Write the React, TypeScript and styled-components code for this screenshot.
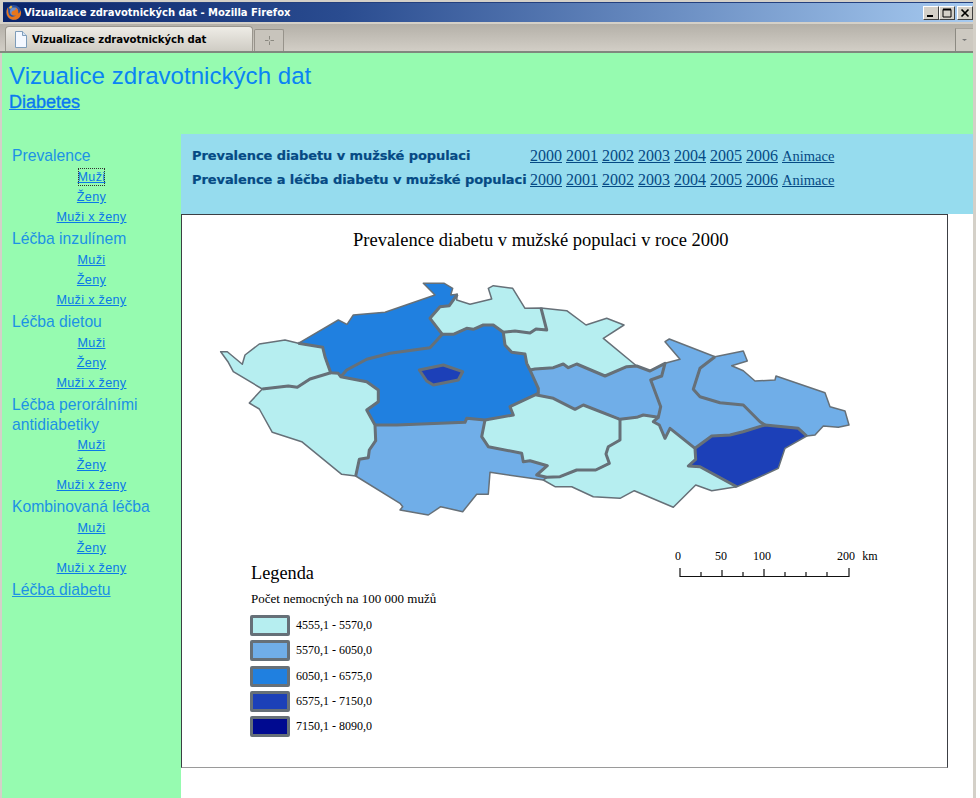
import React from "react";
import styled, { createGlobalStyle } from "styled-components";

const Global = createGlobalStyle`
  html, body { margin: 0; padding: 0; background: #fff; }
`;

const Frame = styled.div`
  width: 976px;
  height: 798px;
  overflow: hidden;
  display: flex;
  flex-direction: column;
  background: #d4d0c8;
`;

const TitleBar = styled.div`
  height: 20px;
  margin: 2px 3px 0;
  padding: 0 0 0 2px;
  display: flex;
  align-items: center;
  gap: 2px;
  background: linear-gradient(90deg, #0a246a 0%, #2a4c90 35%, #a6caf0 100%);
  border-top: 1px solid #24407e;
  box-sizing: border-box;
`;

const TitleText = styled.span`
  flex: 1;
  font: bold 10px "DejaVu Sans", sans-serif;
  color: #fff;
  white-space: nowrap;
  letter-spacing: -0.03px;
`;

const WinButtons = styled.div`
  display: flex;
  gap: 0;
`;

const WinButton = styled.div<{ $gap?: number }>`
  width: 16px;
  height: 14px;
  margin-left: ${(p) => p.$gap ?? 0}px;
  box-sizing: border-box;
  display: flex;
  align-items: center;
  justify-content: center;
  background: #d4d0c8;
  border: 1px solid;
  border-color: #fff #404040 #404040 #fff;
`;

const TabStrip = styled.div`
  height: 29px;
  margin: 2px 3px 0 0;
  padding: 3px 0 0 5px;
  display: flex;
  align-items: flex-end;
  gap: 1px;
  box-sizing: border-box;
  background: linear-gradient(180deg, #b4b0a8 0%, #d2cec6 100%);
  border-bottom: 2px solid #80887e;
`;

const Tab = styled.div`
  width: 248px;
  height: 25px;
  box-sizing: border-box;
  padding-left: 8px;
  display: flex;
  align-items: center;
  gap: 4px;
  background: linear-gradient(180deg, #eeece6 0%, #cfccc4 100%);
  border: 1px solid #9a968e;
  border-bottom: 0;
  border-radius: 4px 4px 0 0;
  font: bold 10.2px "DejaVu Sans", sans-serif;
  letter-spacing: -0.1px;
  color: #000;
`;

const NewTab = styled.div`
  width: 30px;
  height: 22px;
  box-sizing: border-box;
  display: flex;
  align-items: center;
  justify-content: center;
  background: #c8c4bc;
  border: 1px solid #97938b;
  border-bottom: 0;
  border-radius: 2px 2px 0 0;
`;

const TabSpacer = styled.div`
  flex: 1;
`;

const TabMenu = styled.div`
  width: 18px;
  height: 23px;
  box-sizing: border-box;
  display: flex;
  align-items: center;
  justify-content: center;
  background: #cdc9c1;
  border-left: 1px solid #8c8a82;
  border-top: 1px solid #a8a49c;
`;

const Page = styled.div`
  flex: 1;
  min-height: 0;
  margin: 0 3px 0 2px;
  background: #fff;
  display: flex;
  flex-direction: column;
`;

const Header = styled.header`
  height: 81px;
  flex: none;
  box-sizing: border-box;
  padding: 9px 0 0 7px;
  background: #96fbb0;
`;

const Heading = styled.h1`
  margin: 0;
  font: 400 24.1px/28px "Liberation Sans", Arial, sans-serif;
  color: #0a84f4;
`;

const SubHeading = styled.a`
  display: inline-block;
  margin-top: 1px;
  font: 400 18px/22px "Liberation Sans", Arial, sans-serif;
  color: #0a78f0;
  text-decoration: underline;
  -webkit-text-stroke: 0.35px #0a78f0;
`;

const Body = styled.div`
  flex: 1;
  min-height: 0;
  display: flex;
`;

const Sidebar = styled.nav`
  width: 179px;
  flex: none;
  box-sizing: border-box;
  padding-top: 12px;
  background: #96fbb0;
  font-family: "Liberation Sans", Arial, sans-serif;
`;

const Group = styled.div`
  margin-bottom: 2px;
`;

const GroupTitle = styled.div<{ $link?: boolean; $wrapped?: boolean }>`
  padding: 0 8px 0 10px;
  margin-bottom: ${(p) => (p.$wrapped ? 0 : 1)}px;
  font-size: 15.7px;
  line-height: 20px;
  color: #1c92e4;
  text-decoration: ${(p) => (p.$link ? "underline" : "none")};
`;

const SideLink = styled.a<{ $focused?: boolean }>`
  display: block;
  width: max-content;
  margin: 0 auto;
  padding: 0 1px;
  font-size: 12.6px;
  line-height: 20px;
  letter-spacing: 0.32px;
  color: #0a78e8;
  text-decoration: underline;
  outline: ${(p) => (p.$focused ? "1px dotted #333" : "none")};
  outline-offset: -2px;
`;

const Main = styled.main`
  flex: 1;
  min-width: 0;
  background: #fff;
`;

const Filters = styled.section`
  height: 80px;
  box-sizing: border-box;
  padding: 9px 0 0 11px;
  background: #96dcee;
`;

const FilterRow = styled.div`
  height: 24px;
  display: grid;
  grid-template-columns: 338px 1fr;
  align-items: center;
`;

const FilterTitle = styled.span`
  font: bold 13px "DejaVu Sans", sans-serif;
  letter-spacing: -0.08px;
  color: #054a84;
  white-space: nowrap;
  -webkit-text-stroke: 0.2px #054a84;
`;

const Years = styled.span`
  margin-top: 2px;
  font: 16px "Liberation Serif", "Times New Roman", serif;
  color: #054a84;
`;

const YearLink = styled.a<{ $small?: boolean }>`
  font-size: ${(p) => (p.$small ? "14.5px" : "16px")};
  color: #054a84;
  text-decoration: underline;
  margin-right: 4px;
`;

const MapPanel = styled.section`
  width: 767px;
  height: 554px;
  box-sizing: border-box;
  border: 1px solid #3c3f44;
  border-bottom-color: #9a9a9a;
  background: #fff;
  font-family: "Liberation Serif", "Times New Roman", serif;
  color: #000;
`;

const MapTitle = styled.h2`
  margin: 15px 0 0 171px;
  font-weight: 400;
  font-size: 18.5px;
  line-height: 20px;
  white-space: nowrap;
`;

const MapSvg = styled.svg`
  display: block;
  width: 650px;
  height: 245px;
  margin: 25px 0 0 28px;
`;

const MapFoot = styled.div`
  display: flex;
  align-items: flex-start;
  margin-top: 25px;
`;

const Legend = styled.div`
  width: 420px;
  margin: 17px 0 0 68px;
`;

const LegendTitle = styled.div`
  padding-left: 1px;
  font-size: 18.300px;
  line-height: 22px;
`;

const LegendNote = styled.div`
  margin-top: 7px;
  padding-left: 1px;
  font-size: 13px;
  line-height: 15px;
`;

const LegendRows = styled.div`
  display: flex;
  flex-direction: column;
  gap: 4.3px;
  margin-top: 9px;
`;

const LegendRow = styled.div`
  display: flex;
  align-items: center;
  gap: 6px;
  font-size: 12px;
`;

const Swatch = styled.div<{ $color: string }>`
  width: 40px;
  height: 21px;
  box-sizing: border-box;
  background: ${(p) => p.$color};
  border: 3px solid #667078;
  border-radius: 2px;
`;

const ScaleSvg = styled.svg`
  display: block;
  width: 220px;
  height: 40px;
`;

const LIGHT = "#b6eef0";
const MID = "#70aee8";
const STRONG = "#2080e0";
const DARK = "#1c40b8";
const DARKEST = "#000a90";
const LINE = "#667078";

const regions: [string, string][] = [
  [LIGHT, "220.7,351.7 227.3,351.7 242.3,364.3 245,355 259.3,344 285,340 298.3,343.3 322.7,347.3 325,356.7 330.7,372.7 310,379 297.3,387.3 288.3,386 262.3,389 233.3,371.7 228.3,362.3"],
  [LIGHT, "262.3,389 249.3,403 259.3,409 272.3,432.3 301.7,441.7 341.7,474.3 355.7,476 359.3,459.3 368.3,457.7 369.3,450 375.7,440.7 375,425 366.7,410 378.3,401.7 378.3,390 366.7,381.7 340.7,376.7 338.3,373.3 330.7,372.7 310,379 297.3,387.3 288.3,386"],
  [STRONG, "298.3,343.3 338.3,320 347,324.3 353.3,315 385,312.3 435,295 423.3,283.3 444.3,283.3 452.7,288.3 450.7,295 457.3,294.3 449.3,305.7 440,306.7 430,318.3 442.3,334.3 430,347.7 390,353.3 366.7,359.3 346.7,370 340.7,376.7 338.3,373.3 330.7,372.7 325,356.7 322.7,347.3"],
  [STRONG, "340.7,376.7 346.7,370 366.7,359.3 390,353.3 430,347.7 442.3,334.3 453.3,334.3 466.7,328.3 473.3,329.3 483.3,325 493.3,325 503.3,332.3 505,345 511.7,352.3 525,354 526.7,363.3 530,370 538.3,388.3 538.3,393.3 510,406.7 513.3,415 485,420 466.7,418.3 465,422.3 396.7,425 375,425 366.7,410 378.3,401.7 378.3,390 366.7,381.7"],
  [LIGHT, "430,318.3 440,306.7 449.3,305.7 457.3,294.3 456.7,300 470,304.3 491.7,299 488.3,288.3 493.3,285.7 512.7,288.3 525,308.3 541,308 546.7,330 536,329 530,333 515,331 503.3,332.3 493.3,325 483.3,325 473.3,329.3 466.7,328.3 453.3,334.3 442.3,334.3"],
  [LIGHT, "541,308 566.7,310.7 586,325 606.7,318.3 624,325 603.3,338.3 636.7,366 626.7,366.7 605,376 576.7,364 568.3,367.7 563.3,364 553.3,367.7 535,369 530,370 526.7,363.3 525,354 511.7,352.3 505,345 503.3,332.3 515,331 530,333 536,329 546.7,330"],
  [MID, "530,370 535,369 553.3,367.7 563.3,364 568.3,367.7 576.7,364 605,376 626.7,366.7 636.7,366 650,371 665,363.3 661.7,376 650.7,380 660.7,406.7 658.3,417.3 643.3,415 636.7,417.3 620,419.3 583.3,405 575,409.3 553.3,398.3 536.7,395 538.3,393.3 538.3,388.3"],
  [MID, "665,363.3 680,359.3 665,341.7 669.3,339 715,356.7 700,368.3 693.3,389.3 700,396.7 720,402.7 743.3,405 760,421.7 765,425 743,431.7 730,435 711.7,436 695,448.3 670,428.3 665,438.3 659.3,425 653.3,421.7 658.3,417.3 660.7,406.7 650.7,380 661.7,376"],
  [MID, "715,356.7 743.3,351 747.3,361 731.7,365.7 743.3,370.7 755,381 775,380 776,376 825,392.7 830,406.7 845,411 849,425 838.3,427.3 823.3,426 815,435 806.7,436 798.3,428.3 765,425 760,421.7 743.3,405 720,402.7 700,396.7 693.3,389.3 700,368.3"],
  [DARK, "695,448.3 711.7,436 730,435 743,431.7 765,425 798.3,428.3 806.7,436 785,448.3 778.3,468.3 756.7,478.3 736.7,486.7 700,466.7 688.3,466 695.7,459.3"],
  [LIGHT, "546.7,477.3 543.3,480 555,486.7 571.7,486.7 593.3,496.7 620,498.3 634.3,490.7 673.3,507.3 695.7,485 711.7,490.7 736.7,486.7 700,466.7 688.3,466 695.7,459.3 695,448.3 670,428.3 665,438.3 659.3,425 653.3,421.7 658.3,417.3 643.3,415 636.7,417.3 620,419.3 620,440 608.3,446.7 606,454 609.3,463.3 595.7,470 576.7,470 560,476.7"],
  [LIGHT, "536.7,395 553.3,398.3 575,409.3 583.3,405 620,419.3 620,440 608.3,446.7 606,454 609.3,463.3 595.7,470 576.7,470 560,476.7 546.7,477.3 536.7,475 547.3,465.7 530,460.7 523.3,461.7 521.7,453.3 488.3,446.7 481.7,436.7 485,420 513.3,415 510,406.7 538.3,393.3"],
  [MID, "355.7,476 400,503.3 402.7,506.7 400,510 428.3,515 440.7,506.7 462.7,511.7 476.7,494.3 488.3,494.3 490,472.3 543.3,480 546.7,477.3 536.7,475 547.3,465.7 530,460.7 523.3,461.7 521.7,453.3 488.3,446.7 481.7,436.7 485,420 466.7,418.3 465,422.3 396.7,425 375,425 375.7,440.7 369.3,450 368.3,457.7 359.3,459.3"],
];

const borders: string[] = [
  "262.3,389 288.3,386 297.3,387.3 310,379 330.7,372.7",
  "298.3,343.3 322.7,347.3 325,356.7 330.7,372.7 338.3,373.3 340.7,376.7 366.7,381.7 378.3,390 378.3,401.7 366.7,410 375,425 375.7,440.7 369.3,450 368.3,457.7 359.3,459.3 355.7,476",
  "340.7,376.7 346.7,370 366.7,359.3 390,353.3 430,347.7 442.3,334.3 430,318.3 440,306.7 449.3,305.7 457.3,294.3",
  "442.3,334.3 453.3,334.3 466.7,328.3 473.3,329.3 483.3,325 493.3,325 503.3,332.3 505,345 511.7,352.3 525,354 526.7,363.3 530,370 538.3,388.3 538.3,393.3 510,406.7 513.3,415 485,420 466.7,418.3 465,422.3 396.7,425 375,425",
  "503.3,332.3 515,331 530,333 536,329 546.7,330 541,308",
  "530,370 535,369 553.3,367.7 563.3,364 568.3,367.7 576.7,364 605,376 626.7,366.7 636.7,366 650,371 665,363.3 661.7,376 650.7,380 660.7,406.7 658.3,417.3 643.3,415 636.7,417.3 620,419.3 583.3,405 575,409.3 553.3,398.3 536.7,395 538.3,393.3",
  "620,419.3 620,440 608.3,446.7 606,454 609.3,463.3 595.7,470 576.7,470 560,476.7 546.7,477.3 536.7,475 547.3,465.7 530,460.7 523.3,461.7 521.7,453.3 488.3,446.7 481.7,436.7 485,420",
  "658.3,417.3 653.3,421.7 659.3,425 665,438.3 670,428.3 695,448.3 695.7,459.3 688.3,466 700,466.7 736.7,486.7",
  "695,448.3 711.7,436 730,435 743,431.7 765,425 798.3,428.3 806.7,436",
  "715,356.7 700,368.3 693.3,389.3 700,396.7 720,402.7 743.3,405 760,421.7 765,425",
];

const legend: [string, string][] = [
  [LIGHT, "4555,1 - 5570,0"],
  [MID, "5570,1 - 6050,0"],
  [STRONG, "6050,1 - 6575,0"],
  [DARK, "6575,1 - 7150,0"],
  [DARKEST, "7150,1 - 8090,0"],
];

const years = ["2000", "2001", "2002", "2003", "2004", "2005", "2006"];

const groups: { title: string; focused?: boolean; wrapped?: boolean }[] = [
  { title: "Prevalence", focused: true },
  { title: "Léčba inzulínem" },
  { title: "Léčba dietou" },
  { title: "Léčba perorálními antidiabetiky", wrapped: true },
  { title: "Kombinovaná léčba" },
];

const FirefoxIcon = () => (
  <svg width="17" height="17" viewBox="0 0 17 17" aria-hidden="true">
    <circle cx="8.5" cy="8.5" r="7.5" fill="#2a4f9e" />
    <circle cx="9" cy="7.5" r="4" fill="#6c8fcb" />
    <path
      d="M3 3.500C1 6 1 11 4 14c3 2.600 8 2.400 10.600-.8 1.500-2 2-4.700 1-7-.4 1.800-1.300 2.800-2.400 3.300.6-2.200-.4-4.800-2.600-6.500.5 1.600 0 3.200-1.300 3.600-1.800.3-3 1.200-2.800 2.700.3 1.800 2.300 2.700 4.300 2-1.600 2-5 2-6.700-.3C2.800 8.500 3.200 5.800 3 3.500Z"
      fill="#e8761c"
    />
    <path d="M4 3.500 6 1.500 7.500 3 5 5Z" fill="#f4b93a" />
  </svg>
);

const PageIcon = () => (
  <svg width="14" height="17" viewBox="0 0 14 17" aria-hidden="true">
    <path d="M1.500.5h7l4 4v12h-11Z" fill="#f4f8ff" stroke="#7f9db9" />
    <path d="M8.500.5v4h4" fill="#d6e4f5" stroke="#7f9db9" />
  </svg>
);

export default function App() {
  return (
    <Frame>
      <Global />
      <TitleBar>
        <FirefoxIcon />
        <TitleText>Vizualizace zdravotnických dat - Mozilla Firefox</TitleText>
        <WinButtons>
          <WinButton>
            <svg width="10" height="10" viewBox="0 0 10 10"><rect x="1" y="7" width="6" height="2" fill="#000" /></svg>
          </WinButton>
          <WinButton>
            <svg width="10" height="10" viewBox="0 0 10 10"><path d="M1 1.500h8v7.500H1Z" fill="none" stroke="#000" /><path d="M1 1.500h8" stroke="#000" strokeWidth="2" /></svg>
          </WinButton>
          <WinButton $gap={2}>
            <svg width="10" height="10" viewBox="0 0 10 10"><path d="M1.500 1.500l7 7M8.500 1.500l-7 7" stroke="#000" strokeWidth="1.700" /></svg>
          </WinButton>
        </WinButtons>
      </TitleBar>
      <TabStrip>
        <Tab>
          <PageIcon />
          Vizualizace zdravotnických dat
        </Tab>
        <NewTab>
          <svg width="11" height="11" viewBox="0 0 11 11"><path d="M5.500 1v3.500M5.500 6.500V10M1 5.500h3.500M6.500 5.500H10" stroke="#8a8880" /></svg>
        </NewTab>
        <TabSpacer />
        <TabMenu>
          <svg width="7" height="4" viewBox="0 0 7 4"><path d="M1 1h5L3.500 3Z" fill="#777" /></svg>
        </TabMenu>
      </TabStrip>
      <Page>
        <Header>
          <Heading>Vizualice zdravotnických dat</Heading>
          <SubHeading>Diabetes</SubHeading>
        </Header>
        <Body>
          <Sidebar>
            {groups.map((g) => (
              <Group key={g.title}>
                <GroupTitle $wrapped={g.wrapped}>{g.title}</GroupTitle>
                <SideLink $focused={g.focused}>Muži</SideLink>
                <SideLink>Ženy</SideLink>
                <SideLink>Muži x ženy</SideLink>
              </Group>
            ))}
            <GroupTitle $link>Léčba diabetu</GroupTitle>
          </Sidebar>
          <Main>
            <Filters>
              {["Prevalence diabetu v mužské populaci", "Prevalence a léčba diabetu v mužské populaci"].map((t) => (
                <FilterRow key={t}>
                  <FilterTitle>{t}</FilterTitle>
                  <Years>
                    {years.map((y) => (
                      <YearLink key={y}>{y}</YearLink>
                    ))}
                    <YearLink $small>Animace</YearLink>
                  </Years>
                </FilterRow>
              ))}
            </Filters>
            <MapPanel>
              <MapTitle>Prevalence diabetu v mužské populaci v roce 2000</MapTitle>
              <MapSvg viewBox="210 275 650 245" aria-label="Mapa krajů">
                {regions.map(([fill, pts], i) => (
                  <polygon key={i} points={pts} fill={fill} stroke={LINE} strokeWidth="1.500" strokeLinejoin="round" />
                ))}
                {borders.map((pts, i) => (
                  <polyline key={i} points={pts} fill="none" stroke={LINE} strokeWidth="3" strokeLinejoin="round" />
                ))}
                <polygon
                  points="419.3,370 443.3,365 462.7,371.7 458.3,380 433.3,385 426.7,381"
                  fill={DARK}
                  stroke={LINE}
                  strokeWidth="3"
                  strokeLinejoin="round"
                />
              </MapSvg>
              <MapFoot>
                <Legend>
                  <LegendTitle>Legenda</LegendTitle>
                  <LegendNote>Počet nemocných na 100 000 mužů</LegendNote>
                  <LegendRows>
                    {legend.map(([c, t]) => (
                      <LegendRow key={t}>
                        <Swatch $color={c} />
                        {t}
                      </LegendRow>
                    ))}
                  </LegendRows>
                </Legend>
                <ScaleSvg viewBox="670 545 220 40">
                  <g fontFamily="'Liberation Serif', serif" fontSize="12" fill="#000" textAnchor="middle">
                    <text x="678" y="560">0</text>
                    <text x="721" y="560">50</text>
                    <text x="762" y="560">100</text>
                    <text x="846" y="560">200</text>
                    <text x="870" y="560">km</text>
                  </g>
                  <path
                    d="M680 576.500H849M680 568v9M701 572v5M722 570v7M743 572v5M764 569v8M785 572v5M806 572v5M827 572v5M849 568v9"
                    stroke="#111"
                    strokeWidth="1.200"
                    fill="none"
                  />
                </ScaleSvg>
              </MapFoot>
            </MapPanel>
          </Main>
        </Body>
      </Page>
    </Frame>
  );
}
